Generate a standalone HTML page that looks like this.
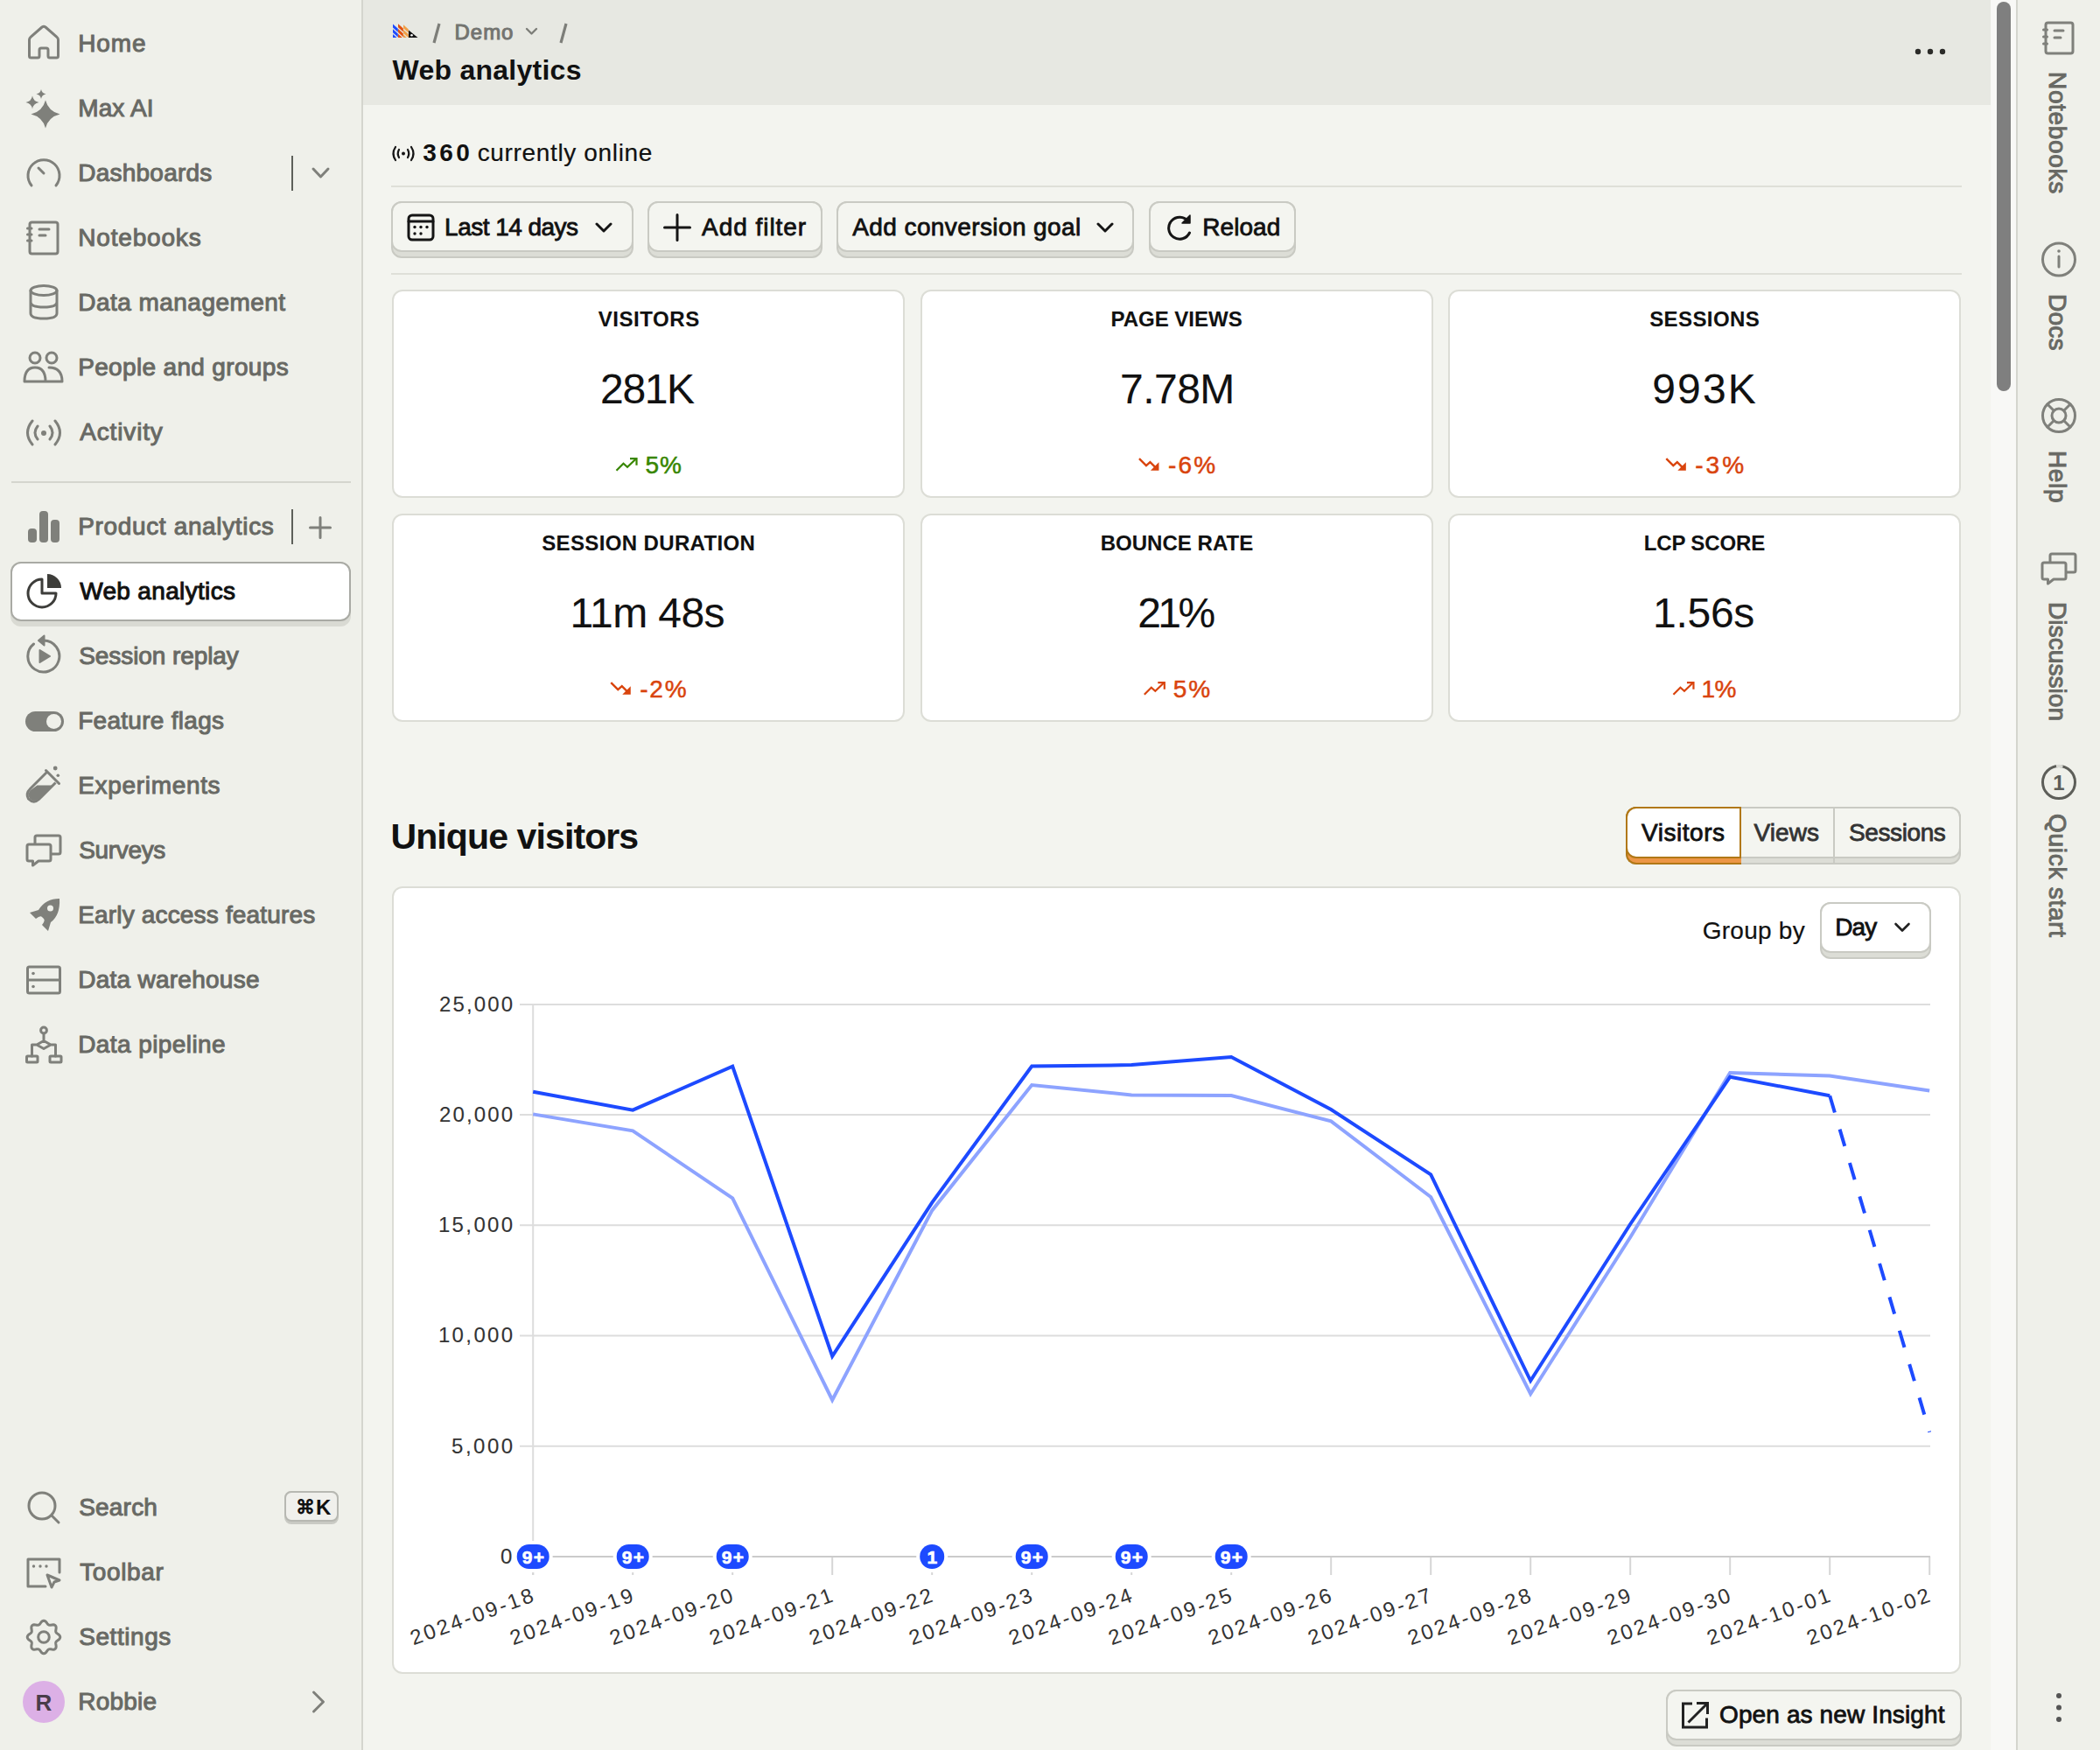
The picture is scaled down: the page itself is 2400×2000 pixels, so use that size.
<!DOCTYPE html>
<html><head><meta charset="utf-8"><title>Web analytics</title>
<style>
html,body{margin:0;padding:0;}
body{width:2400px;height:2000px;overflow:hidden;position:relative;background:#f3f4ef;font-family:"Liberation Sans", sans-serif;}
.t{position:absolute;white-space:nowrap;}
.b{position:absolute;box-sizing:border-box;}
@media (max-width:1300px){html{zoom:0.5;}}
</style></head><body>
<div class="b" style="left:0px;top:0px;width:413px;height:2000px;background:#eff0ea;"></div><div class="b" style="left:413px;top:0px;width:2px;height:2000px;background:#d4d5ce;"></div><div class="b" style="left:415px;top:0px;width:1860px;height:120px;background:#e7e8e2;"></div><div class="b" style="left:2275px;top:0px;width:29px;height:2000px;background:#f8f8f6;"></div><div class="b" style="left:2282px;top:2px;width:16px;height:445px;background:#7f7f7f;border-radius:8px;"></div><div class="b" style="left:2304px;top:0px;width:2px;height:2000px;background:#d4d5ce;"></div><div class="b" style="left:2306px;top:0px;width:94px;height:2000px;background:#eff0ea;"></div><div class="b" style="left:12px;top:642px;width:389px;height:74px;background:#d9dad3;border-radius:12px;"></div><div class="b" style="left:12px;top:642px;width:389px;height:68px;background:#ffffff;border:2px solid #a9aaa4;border-radius:12px;"></div><div class="t" style="left:89.20px;top:36.30px;font-size:28px;line-height:28px;font-weight:400;color:#686964;letter-spacing:0.933px;-webkit-text-stroke:1.0px #686964;">Home</div><div class="t" style="left:89.20px;top:110.30px;font-size:28px;line-height:28px;font-weight:400;color:#686964;letter-spacing:0.140px;-webkit-text-stroke:1.0px #686964;">Max AI</div><div class="t" style="left:89.20px;top:184.30px;font-size:28px;line-height:28px;font-weight:400;color:#686964;letter-spacing:0.244px;-webkit-text-stroke:1.0px #686964;">Dashboards</div><div class="t" style="left:89.20px;top:258.30px;font-size:28px;line-height:28px;font-weight:400;color:#686964;letter-spacing:0.825px;-webkit-text-stroke:1.0px #686964;">Notebooks</div><div class="t" style="left:89.20px;top:332.30px;font-size:28px;line-height:28px;font-weight:400;color:#686964;letter-spacing:0.471px;-webkit-text-stroke:1.0px #686964;">Data management</div><div class="t" style="left:89.20px;top:406.30px;font-size:28px;line-height:28px;font-weight:400;color:#686964;letter-spacing:0.338px;-webkit-text-stroke:1.0px #686964;">People and groups</div><div class="t" style="left:91.20px;top:480.30px;font-size:28px;line-height:28px;font-weight:400;color:#686964;letter-spacing:0.857px;-webkit-text-stroke:1.0px #686964;">Activity</div><div class="t" style="left:89.20px;top:588.30px;font-size:28px;line-height:28px;font-weight:400;color:#686964;letter-spacing:0.650px;-webkit-text-stroke:1.0px #686964;">Product analytics</div><div class="t" style="left:91.20px;top:662.30px;font-size:28px;line-height:28px;font-weight:400;color:#111;letter-spacing:0.333px;-webkit-text-stroke:1.0px #111;">Web analytics</div><div class="t" style="left:90.20px;top:736.30px;font-size:28px;line-height:28px;font-weight:400;color:#686964;letter-spacing:-0.077px;-webkit-text-stroke:1.0px #686964;">Session replay</div><div class="t" style="left:89.20px;top:810.30px;font-size:28px;line-height:28px;font-weight:400;color:#686964;letter-spacing:0.283px;-webkit-text-stroke:1.0px #686964;">Feature flags</div><div class="t" style="left:89.20px;top:884.30px;font-size:28px;line-height:28px;font-weight:400;color:#686964;letter-spacing:0.680px;-webkit-text-stroke:1.0px #686964;">Experiments</div><div class="t" style="left:90.20px;top:958.30px;font-size:28px;line-height:28px;font-weight:400;color:#686964;letter-spacing:-0.333px;-webkit-text-stroke:1.0px #686964;">Surveys</div><div class="t" style="left:89.20px;top:1032.30px;font-size:28px;line-height:28px;font-weight:400;color:#686964;letter-spacing:0.170px;-webkit-text-stroke:1.0px #686964;">Early access features</div><div class="t" style="left:89.20px;top:1106.30px;font-size:28px;line-height:28px;font-weight:400;color:#686964;letter-spacing:0.262px;-webkit-text-stroke:1.0px #686964;">Data warehouse</div><div class="t" style="left:89.20px;top:1180.30px;font-size:28px;line-height:28px;font-weight:400;color:#686964;letter-spacing:0.417px;-webkit-text-stroke:1.0px #686964;">Data pipeline</div><div class="t" style="left:90.20px;top:1709.30px;font-size:28px;line-height:28px;font-weight:400;color:#686964;letter-spacing:0.200px;-webkit-text-stroke:1.0px #686964;">Search</div><div class="t" style="left:91.20px;top:1783.30px;font-size:28px;line-height:28px;font-weight:400;color:#686964;letter-spacing:0.633px;-webkit-text-stroke:1.0px #686964;">Toolbar</div><div class="t" style="left:90.20px;top:1857.30px;font-size:28px;line-height:28px;font-weight:400;color:#686964;letter-spacing:0.571px;-webkit-text-stroke:1.0px #686964;">Settings</div><div class="t" style="left:89.20px;top:1931.30px;font-size:28px;line-height:28px;font-weight:400;color:#686964;letter-spacing:0.220px;-webkit-text-stroke:1.0px #686964;">Robbie</div><svg class="b" style="left:0px;top:0px;" width="413" height="2000" viewBox="0 0 413 2000"><path d="M33.5 64 V45.5 Q33.5 43.5 35 42.3 L48 31 Q50 29.5 52 31 L65 42.3 Q66.5 43.5 66.5 45.5 V64 Q66.5 66 64.5 66 H57 Q55 66 55 64 V57 Q55 55 53 55 H47 Q45 55 45 57 V64 Q45 66 43 66 H35.5 Q33.5 66 33.5 64 Z" fill="none" stroke="#7f807b" stroke-width="3" stroke-linecap="round" stroke-linejoin="round"/><path d="M52 114.5 Q55.3 127.3 68.5 130.5 Q55.3 133.7 52 146.5 Q48.7 133.7 35.5 130.5 Q48.7 127.3 52 114.5 Z" fill="#7f807b"/><path d="M37 109.5 Q38.125 115.875 44.5 117 Q38.125 118.125 37 124.5 Q35.875 118.125 29.5 117 Q35.875 115.875 37 109.5 Z" fill="#7f807b"/><path d="M47 102.0 Q47.825 106.675 52.5 107.5 Q47.825 108.325 47 113.0 Q46.175 108.325 41.5 107.5 Q46.175 106.675 47 102.0 Z" fill="#7f807b"/><path d="M36 212 A18 18 0 1 1 64 212" fill="none" stroke="#7f807b" stroke-width="3" stroke-linecap="round" stroke-linejoin="round" stroke-width="3.6"/><path d="M44 192 L50 198" fill="none" stroke="#7f807b" stroke-width="3" stroke-linecap="round" stroke-linejoin="round" stroke-width="3.6"/><rect x="34" y="254" width="32" height="36" rx="2.5" fill="none" stroke="#7f807b" stroke-width="3" stroke-linecap="round" stroke-linejoin="round"/><path d="M31.5 261 H36 M31.5 268 H36 M31.5 275 H36" fill="none" stroke="#7f807b" stroke-width="3" stroke-linecap="round" stroke-linejoin="round" stroke-width="2.4"/><path d="M45 262 H56 M45 269 H52" fill="none" stroke="#7f807b" stroke-width="3" stroke-linecap="round" stroke-linejoin="round"/><ellipse cx="50" cy="332" rx="15" ry="5.5" fill="none" stroke="#7f807b" stroke-width="3" stroke-linecap="round" stroke-linejoin="round"/><path d="M35 332 V358 Q35 364 50 364 Q65 364 65 358 V332 M35 345 Q35 351 50 351 Q65 351 65 345" fill="none" stroke="#7f807b" stroke-width="3" stroke-linecap="round" stroke-linejoin="round"/><circle cx="40" cy="409" r="6" fill="none" stroke="#7f807b" stroke-width="3" stroke-linecap="round" stroke-linejoin="round"/><circle cx="59" cy="409" r="6" fill="none" stroke="#7f807b" stroke-width="3" stroke-linecap="round" stroke-linejoin="round"/><path d="M28 436 Q28 420 40 420 Q52 420 52 436 Z M56 420 Q71 420 71 436 H52" fill="none" stroke="#7f807b" stroke-width="3" stroke-linecap="round" stroke-linejoin="round"/><path d="M37 481 Q26 494.5 37 508 M63 481 Q74 494.5 63 508 M43 487 Q37 494.5 43 502 M57 487 Q63 494.5 57 502" fill="none" stroke="#7f807b" stroke-width="3" stroke-linecap="round" stroke-linejoin="round" stroke-width="3.2"/><circle cx="50" cy="495" r="3" fill="#7f807b"/><rect x="32" y="604" width="10" height="16" rx="4" fill="#7f807b"/><rect x="45" y="584" width="10" height="36" rx="4" fill="#7f807b"/><rect x="58" y="594" width="10" height="26" rx="4" fill="#7f807b"/><path d="M48 662 A16 16 0 1 0 64 678 H48 Z" fill="none" stroke="#3d3d3a" stroke-width="3" stroke-linejoin="round"/><path d="M54 656 A16 16 0 0 1 70 672 H54 Z" fill="#3d3d3a"/><path d="M50 732 A18 18 0 1 1 38.5 736" fill="none" stroke="#7f807b" stroke-width="3" stroke-linecap="round" stroke-linejoin="round" stroke-width="3.8"/><path d="M50.5 726.5 L44 732 L50.5 737.5 Z" fill="#7f807b" stroke="#7f807b" stroke-width="2" stroke-linejoin="round"/><path d="M45.5 743 L57 750 L45.5 757 Z" fill="#7f807b" stroke="#7f807b" stroke-width="2" stroke-linejoin="round"/><rect x="29" y="813" width="44" height="23" rx="11.5" fill="#7f807b"/><circle cx="61.5" cy="824.5" r="8.5" fill="#eff0ea"/><path d="M53.5 882.5 L34.5 901.5 Q29 907 32.5 913 Q38.5 919 44.5 913.5 L63.5 894.5" fill="none" stroke="#7f807b" stroke-width="3"/><path d="M42.5 897.5 H59.5 L44.5 912.5 Q38.5 917.5 34 912.5 Q30.5 907.5 35 903 Z" fill="#7f807b"/><path d="M52.5 880.5 L67.5 895.5" fill="none" stroke="#7f807b" stroke-width="3" stroke-linecap="round" stroke-linejoin="round" stroke-width="3.2"/><circle cx="63.2" cy="878" r="2.4" fill="#7f807b"/><circle cx="66.3" cy="886.2" r="1.8" fill="#7f807b"/><path d="M33 965 H56 Q58 965 58 967 V982 Q58 984 56 984 H44 L37.5 989 V984 H33 Q31 984 31 982 V967 Q31 965 33 965 Z" fill="none" stroke="#7f807b" stroke-width="3" stroke-linecap="round" stroke-linejoin="round" stroke-width="2.8"/><path d="M40 964 V957 Q40 955 42 955 H67 Q69 955 69 957 V974 Q69 976 67 976 H59" fill="none" stroke="#7f807b" stroke-width="3" stroke-linecap="round" stroke-linejoin="round" stroke-width="2.8"/><path d="M68 1027 Q52 1027 44 1040 L34 1043 L41 1050 Q46 1046 48 1048 L50 1050 Q52 1052 48 1057 L55 1064 L58 1054 Q69 1046 68 1027 Z" fill="#7f807b"/><circle cx="57.5" cy="1038" r="3.5" fill="#eff0ea"/><rect x="31.5" y="1105" width="37" height="30" rx="2" fill="none" stroke="#7f807b" stroke-width="3" stroke-linecap="round" stroke-linejoin="round" stroke-width="2.8"/><path d="M31.5 1120 H68.5" fill="none" stroke="#7f807b" stroke-width="3" stroke-linecap="round" stroke-linejoin="round" stroke-width="2.8"/><circle cx="38" cy="1112.5" r="1.8" fill="#7f807b"/><circle cx="38" cy="1127.5" r="1.8" fill="#7f807b"/><circle cx="50" cy="1177.5" r="3.4" fill="none" stroke="#7f807b" stroke-width="3" stroke-linecap="round" stroke-linejoin="round" stroke-width="2.6"/><path d="M50 1181 V1189.5 M50 1189.5 L58 1194 L50 1198.5 L42 1194 Z M42 1194 H36.5 V1207 M58 1194 H63.5 V1207" fill="none" stroke="#7f807b" stroke-width="3" stroke-linecap="round" stroke-linejoin="round" stroke-width="2.6"/><rect x="30.5" y="1207" width="12.5" height="7" rx="1" fill="none" stroke="#7f807b" stroke-width="3" stroke-linecap="round" stroke-linejoin="round" stroke-width="2.6"/><rect x="57" y="1207" width="13" height="7" rx="1" fill="none" stroke="#7f807b" stroke-width="3" stroke-linecap="round" stroke-linejoin="round" stroke-width="2.6"/><circle cx="48" cy="1721" r="15" fill="none" stroke="#7f807b" stroke-width="3" stroke-linecap="round" stroke-linejoin="round"/><path d="M59 1732 L67 1740" fill="none" stroke="#7f807b" stroke-width="3" stroke-linecap="round" stroke-linejoin="round"/><path d="M52 1813 H32 V1782 H68 V1797" fill="none" stroke="#7f807b" stroke-width="3" stroke-linecap="round" stroke-linejoin="round" stroke-width="2.8"/><circle cx="38.5" cy="1790" r="1.7" fill="#7f807b"/><circle cx="46" cy="1790" r="1.7" fill="#7f807b"/><circle cx="53" cy="1790" r="1.7" fill="#7f807b"/><path d="M54 1800 L68 1806 L62 1808 L59 1814 Z" fill="none" stroke="#7f807b" stroke-width="3" stroke-linecap="round" stroke-linejoin="round" stroke-width="2.6"/><path d="M50.00 1852.20 L51.21 1852.49 L52.33 1853.30 L53.30 1854.42 L54.13 1855.59 L54.90 1856.56 L55.74 1857.14 L56.75 1857.32 L57.97 1857.19 L59.39 1856.95 L60.87 1856.84 L62.23 1857.06 L63.29 1857.71 L63.94 1858.77 L64.16 1860.13 L64.05 1861.61 L63.81 1863.03 L63.68 1864.25 L63.86 1865.26 L64.44 1866.10 L65.41 1866.87 L66.58 1867.70 L67.70 1868.67 L68.51 1869.79 L68.80 1871.00 L68.51 1872.21 L67.70 1873.33 L66.58 1874.30 L65.41 1875.13 L64.44 1875.90 L63.86 1876.74 L63.68 1877.75 L63.81 1878.97 L64.05 1880.39 L64.16 1881.87 L63.94 1883.23 L63.29 1884.29 L62.23 1884.94 L60.87 1885.16 L59.39 1885.05 L57.97 1884.81 L56.75 1884.68 L55.74 1884.86 L54.90 1885.44 L54.13 1886.41 L53.30 1887.58 L52.33 1888.70 L51.21 1889.51 L50.00 1889.80 L48.79 1889.51 L47.67 1888.70 L46.70 1887.58 L45.87 1886.41 L45.10 1885.44 L44.26 1884.86 L43.25 1884.68 L42.03 1884.81 L40.61 1885.05 L39.13 1885.16 L37.77 1884.94 L36.71 1884.29 L36.06 1883.23 L35.84 1881.87 L35.95 1880.39 L36.19 1878.97 L36.32 1877.75 L36.14 1876.74 L35.56 1875.90 L34.59 1875.13 L33.42 1874.30 L32.30 1873.33 L31.49 1872.21 L31.20 1871.00 L31.49 1869.79 L32.30 1868.67 L33.42 1867.70 L34.59 1866.87 L35.56 1866.10 L36.14 1865.26 L36.32 1864.25 L36.19 1863.03 L35.95 1861.61 L35.84 1860.13 L36.06 1858.77 L36.71 1857.71 L37.77 1857.06 L39.13 1856.84 L40.61 1856.95 L42.02 1857.19 L43.25 1857.32 L44.26 1857.14 L45.10 1856.56 L45.87 1855.59 L46.70 1854.42 L47.67 1853.30 L48.79 1852.49 Z" fill="none" stroke="#7f807b" stroke-width="3" stroke-linecap="round" stroke-linejoin="round" stroke-width="2.8"/><circle cx="50" cy="1871" r="6.3" fill="none" stroke="#7f807b" stroke-width="3" stroke-linecap="round" stroke-linejoin="round" stroke-width="2.8"/></svg><div class="b" style="left:333px;top:178px;width:2px;height:40px;background:#5e605a;"></div><div class="b" style="left:333px;top:582px;width:2px;height:40px;background:#5e605a;"></div><svg class="b" style="left:350px;top:185px;" width="30" height="25" viewBox="0 0 30 25"><path d="M8 8 L16.5 17 L25 8" fill="none" stroke="#7f807b" stroke-width="3" stroke-linecap="round" stroke-linejoin="round" stroke-width="3"/></svg><svg class="b" style="left:350px;top:587px;" width="32" height="32" viewBox="0 0 32 32"><path d="M16 4.5 V27.5 M4.5 16 H27.5" fill="none" stroke="#7f807b" stroke-width="3" stroke-linecap="round" stroke-linejoin="round" stroke-width="2.6"/></svg><div class="b" style="left:13px;top:550px;width:388px;height:2px;background:#d4d5ce;"></div><div class="b" style="left:325px;top:1704px;width:62px;height:38px;background:#c9cac4;border-radius:8px;"></div><div class="b" style="left:325px;top:1704px;width:62px;height:35px;background:#f0f0ec;border:2px solid #b7b8b2;border-radius:8px;"></div><div class="t" style="left:338px;top:1712.38px;font-size:22px;line-height:22px;font-weight:700;color:#111;">&#8984;</div><div class="t" style="left:361px;top:1710.68px;font-size:24px;line-height:24px;font-weight:700;color:#111;">K</div><div class="b" style="left:26px;top:1921px;width:48px;height:48px;background:#dcb0e6;border-radius:50%;"></div><div class="t" style="left:30.0px;width:40px;text-align:center;top:1932.99px;font-size:26px;line-height:26px;font-weight:700;color:#4a3d4a;">R</div><svg class="b" style="left:350px;top:1928px;" width="30" height="34" viewBox="0 0 30 34"><path d="M8.5 6 L19.5 17 L8.5 28" fill="none" stroke="#7f807b" stroke-width="3" stroke-linecap="round" stroke-linejoin="round" stroke-width="3.8" stroke-linecap="butt" stroke-linejoin="miter"/></svg><svg class="b" style="left:0px;top:0px;" width="2400" height="120" viewBox="0 0 2400 120"><clipPath id="lgclip"><rect x="440" y="20" width="40" height="23"/></clipPath><g clip-path="url(#lgclip)"><path d="M449 27.6 L454.8 32.820000000000014 V36.820000000000014 L449 31.6 Z" fill="#1d4aff"/><path d="M449 33.300000000000004 L454.8 38.52000000000002 V42.52000000000002 L449 37.300000000000004 Z" fill="#1d4aff"/><path d="M449 39.0 L454.8 44.22000000000001 V48.22000000000001 L449 43.0 Z" fill="#1d4aff"/><path d="M449 44.7 L454.8 49.920000000000016 V53.920000000000016 L449 48.7 Z" fill="#1d4aff"/><path d="M455 27.3 L460.8 32.52000000000001 V36.52000000000001 L455 31.3 Z" fill="#e2500d"/><path d="M455 33.0 L460.8 38.22000000000001 V42.22000000000001 L455 37.0 Z" fill="#e2500d"/><path d="M455 38.7 L460.8 43.920000000000016 V47.920000000000016 L455 42.7 Z" fill="#e2500d"/><path d="M455 44.400000000000006 L460.8 49.62000000000002 V53.62000000000002 L455 48.400000000000006 Z" fill="#e2500d"/><path d="M461 28.2 L466.8 33.42000000000001 V37.42000000000001 L461 32.2 Z" fill="#f0a048"/><path d="M461 33.9 L466.8 39.12000000000001 V43.12000000000001 L461 37.9 Z" fill="#f0a048"/><path d="M461 39.6 L466.8 44.820000000000014 V48.820000000000014 L461 43.6 Z" fill="#f0a048"/><path d="M461 45.3 L466.8 50.52000000000001 V54.52000000000001 L461 49.3 Z" fill="#f0a048"/></g><path d="M467 34.5 L477.5 43 H467 Z" fill="#111"/><circle cx="470.5" cy="40.3" r="1.3" fill="#fff"/><path d="M502 27 L496 49 M647 27 L641 49" stroke="#7d7e79" stroke-width="3.2" stroke-linecap="butt"/><path d="M602 33 L607.5 38.5 L613 33" fill="none" stroke="#7d7e79" stroke-width="2.4" stroke-linecap="round" stroke-linejoin="round"/><circle cx="2192" cy="59" r="3.2" fill="#2b2b28"/><circle cx="2206" cy="59" r="3.2" fill="#2b2b28"/><circle cx="2220" cy="59" r="3.2" fill="#2b2b28"/></svg><div class="t" style="left:519.60px;top:24.68px;font-size:24px;line-height:24px;font-weight:400;color:#737470;letter-spacing:0.933px;-webkit-text-stroke:1.0px #737470;">Demo</div><div class="t" style="left:448.60px;top:63.91px;font-size:32px;line-height:32px;font-weight:700;color:#111;letter-spacing:0.250px;">Web analytics</div><svg class="b" style="left:0px;top:0px;pointer-events:none;" width="2400" height="2000" viewBox="0 0 2400 2000"><rect x="2338" y="26" width="31" height="35" rx="2.5" fill="none" stroke="#7f807b" stroke-width="3" stroke-linecap="round" stroke-linejoin="round"/><path d="M2335.5 34 H2339.5 M2335.5 42 H2339.5 M2335.5 50 H2339.5" fill="none" stroke="#7f807b" stroke-width="3" stroke-linecap="round" stroke-linejoin="round" stroke-width="2.4"/><path d="M2348 35 H2358 M2348 43 H2355" fill="none" stroke="#7f807b" stroke-width="3" stroke-linecap="round" stroke-linejoin="round"/><circle cx="2353" cy="296.5" r="18.5" fill="none" stroke="#7f807b" stroke-width="3" stroke-linecap="round" stroke-linejoin="round" stroke-width="2.8"/><path d="M2353 293 V305" fill="none" stroke="#7f807b" stroke-width="3" stroke-linecap="round" stroke-linejoin="round" stroke-width="3"/><circle cx="2353" cy="287" r="1.8" fill="#7f807b"/><circle cx="2353" cy="475" r="18.5" fill="none" stroke="#7f807b" stroke-width="3" stroke-linecap="round" stroke-linejoin="round" stroke-width="2.8"/><circle cx="2353" cy="475" r="8" fill="none" stroke="#7f807b" stroke-width="3" stroke-linecap="round" stroke-linejoin="round" stroke-width="2.8"/><path d="M2340 462 L2347 469 M2366 462 L2359 469 M2340 488 L2347 481 M2366 488 L2359 481" fill="none" stroke="#7f807b" stroke-width="3" stroke-linecap="round" stroke-linejoin="round" stroke-width="2.8"/><path d="M2336 643 H2359 Q2361 643 2361 645 V660 Q2361 662 2359 662 H2347 L2340.5 667 V662 H2336 Q2334 662 2334 660 V645 Q2334 643 2336 643 Z" fill="none" stroke="#7f807b" stroke-width="3" stroke-linecap="round" stroke-linejoin="round" stroke-width="2.8"/><path d="M2343 642 V635 Q2343 633 2345 633 H2370 Q2372 633 2372 635 V652 Q2372 654 2370 654 H2362" fill="none" stroke="#7f807b" stroke-width="3" stroke-linecap="round" stroke-linejoin="round" stroke-width="2.8"/><circle cx="2353" cy="894" r="18.5" fill="none" stroke="#5d5e59" stroke-width="3"/><path d="M2350 875.7 A18.5 18.5 0 0 1 2357.5 876" fill="none" stroke="#d8d9d3" stroke-width="3.2"/><circle cx="2353" cy="1938" r="3" fill="#555"/><circle cx="2353" cy="1951.5" r="3" fill="#555"/><circle cx="2353" cy="1965" r="3" fill="#555"/></svg><div class="t" style="left:2343px;top:883px;font-size:24px;line-height:24px;font-weight:700;color:#5d5e59;width:20px;text-align:center;">1</div><div class="t" style="left:2365.10px;top:82.40px;font-size:28px;line-height:28px;font-weight:400;color:#686964;letter-spacing:0.662px;transform-origin:0 0;transform:rotate(90deg);-webkit-text-stroke:1.0px #686964;">Notebooks</div><div class="t" style="left:2365.10px;top:335.70px;font-size:28px;line-height:28px;font-weight:400;color:#686964;letter-spacing:0.200px;transform-origin:0 0;transform:rotate(90deg);-webkit-text-stroke:1.0px #686964;">Docs</div><div class="t" style="left:2365.10px;top:514.50px;font-size:28px;line-height:28px;font-weight:400;color:#686964;letter-spacing:0.633px;transform-origin:0 0;transform:rotate(90deg);-webkit-text-stroke:1.0px #686964;">Help</div><div class="t" style="left:2365.10px;top:688.00px;font-size:28px;line-height:28px;font-weight:400;color:#686964;letter-spacing:0.078px;transform-origin:0 0;transform:rotate(90deg);-webkit-text-stroke:1.0px #686964;">Discussion</div><div class="t" style="left:2365.10px;top:930.00px;font-size:28px;line-height:28px;font-weight:400;color:#686964;letter-spacing:0.720px;transform-origin:0 0;transform:rotate(90deg);-webkit-text-stroke:1.0px #686964;">Quick start</div><svg class="b" style="left:0px;top:0px;" width="2400" height="2000" viewBox="0 0 2400 2000"><path d="M452 168 Q447 175.5 452 183 M470 168 Q475 175.5 470 183 M456 171 Q453.5 175.5 456 180 M466 171 Q468.5 175.5 466 180" fill="none" stroke="#151515" stroke-width="2.2" stroke-linecap="round"/><circle cx="461" cy="175.5" r="2" fill="#151515"/></svg><div class="t" style="left:483.20px;top:161.30px;font-size:28px;line-height:28px;font-weight:700;color:#111;letter-spacing:3.500px;">360</div><div class="t" style="left:545.70px;top:161.30px;font-size:28px;line-height:28px;font-weight:400;color:#111;letter-spacing:0.653px;-webkit-text-stroke:0.2px #111;">currently online</div><div class="b" style="left:447px;top:212px;width:1795px;height:2px;background:#dedfd8;"></div><div class="b" style="left:447px;top:312px;width:1795px;height:2px;background:#dedfd8;"></div><div class="b" style="left:447px;top:230px;width:277px;height:65px;background:#dcddd6;border:2px solid #c9cac3;border-radius:12px;"></div><div class="b" style="left:447px;top:230px;width:277px;height:58px;background:#f4f5f0;border:2px solid #c9cac3;border-radius:12px;"></div><div class="b" style="left:740px;top:230px;width:200px;height:65px;background:#dcddd6;border:2px solid #c9cac3;border-radius:12px;"></div><div class="b" style="left:740px;top:230px;width:200px;height:58px;background:#f4f5f0;border:2px solid #c9cac3;border-radius:12px;"></div><div class="b" style="left:956px;top:230px;width:340px;height:65px;background:#dcddd6;border:2px solid #c9cac3;border-radius:12px;"></div><div class="b" style="left:956px;top:230px;width:340px;height:58px;background:#f4f5f0;border:2px solid #c9cac3;border-radius:12px;"></div><div class="b" style="left:1313px;top:230px;width:168px;height:65px;background:#dcddd6;border:2px solid #c9cac3;border-radius:12px;"></div><div class="b" style="left:1313px;top:230px;width:168px;height:58px;background:#f4f5f0;border:2px solid #c9cac3;border-radius:12px;"></div><svg class="b" style="left:0px;top:0px;" width="2400" height="2000" viewBox="0 0 2400 2000"><rect x="467" y="246" width="28" height="28" rx="4" fill="none" stroke="#151515" stroke-width="3" stroke-linecap="round" stroke-linejoin="round" stroke-width="2.8"/><path d="M467 253 H495" fill="none" stroke="#151515" stroke-width="3" stroke-linecap="round" stroke-linejoin="round" stroke-width="2.8"/><circle cx="474" cy="259.5" r="1.7" fill="#151515"/><circle cx="481" cy="259.5" r="1.7" fill="#151515"/><circle cx="488" cy="259.5" r="1.7" fill="#151515"/><circle cx="474" cy="267" r="1.7" fill="#151515"/><circle cx="481" cy="267" r="1.7" fill="#151515"/><path d="M682 256 L690 264 L698 256" fill="none" stroke="#151515" stroke-width="3" stroke-linecap="round" stroke-linejoin="round" stroke-width="2.6"/><path d="M774 245.5 V274.5 M759.5 260 H788.5" fill="none" stroke="#151515" stroke-width="3" stroke-linecap="round" stroke-linejoin="round" stroke-width="2.4" stroke-linecap="butt"/><path d="M1255 256 L1263 264 L1271 256" fill="none" stroke="#151515" stroke-width="3" stroke-linecap="round" stroke-linejoin="round" stroke-width="2.6"/><path d="M1358 253 A12.5 12.5 0 1 0 1359.5 266" fill="none" stroke="#151515" stroke-width="3" stroke-linecap="round" stroke-linejoin="round" stroke-width="3"/><path d="M1360 246 V255 H1351 Z" fill="#151515" stroke="#151515" stroke-width="1.5" stroke-linejoin="round"/></svg><div class="t" style="left:508.10px;top:246.30px;font-size:28px;line-height:28px;font-weight:400;color:#111;letter-spacing:-0.527px;-webkit-text-stroke:0.8px #111;">Last 14 days</div><div class="t" style="left:802.00px;top:246.30px;font-size:28px;line-height:28px;font-weight:400;color:#111;letter-spacing:0.967px;-webkit-text-stroke:0.8px #111;">Add filter</div><div class="t" style="left:974.30px;top:246.30px;font-size:28px;line-height:28px;font-weight:400;color:#111;letter-spacing:0.400px;-webkit-text-stroke:0.8px #111;">Add conversion goal</div><div class="t" style="left:1374.30px;top:246.30px;font-size:28px;line-height:28px;font-weight:400;color:#111;letter-spacing:0.040px;-webkit-text-stroke:0.8px #111;">Reload</div><div class="b" style="left:448px;top:331px;width:586px;height:238px;background:#fff;border:2px solid #dcddd6;border-radius:12px;"></div><div class="t" style="left:683.70px;top:352.88px;font-size:24px;line-height:24px;font-weight:700;color:#111;letter-spacing:0.557px;-webkit-text-stroke:0.1px #111;">VISITORS</div><div class="t" style="left:686.10px;top:421.37px;font-size:48px;line-height:48px;font-weight:400;color:#111;letter-spacing:-1.367px;-webkit-text-stroke:0.1px #111;">281K</div><div class="t" style="left:737.50px;top:517.50px;font-size:28px;line-height:28px;font-weight:400;color:#388600;letter-spacing:1.000px;-webkit-text-stroke:0.5px #388600;">5%</div><div class="b" style="left:1052px;top:331px;width:586px;height:238px;background:#fff;border:2px solid #dcddd6;border-radius:12px;"></div><div class="t" style="left:1269.50px;top:352.88px;font-size:24px;line-height:24px;font-weight:700;color:#111;letter-spacing:-0.011px;-webkit-text-stroke:0.1px #111;">PAGE VIEWS</div><div class="t" style="left:1280.00px;top:421.37px;font-size:48px;line-height:48px;font-weight:400;color:#111;letter-spacing:-0.525px;-webkit-text-stroke:0.1px #111;">7.78M</div><div class="t" style="left:1334.95px;top:517.50px;font-size:28px;line-height:28px;font-weight:400;color:#d9440d;letter-spacing:2.250px;-webkit-text-stroke:0.5px #d9440d;">-6%</div><div class="b" style="left:1655px;top:331px;width:586px;height:238px;background:#fff;border:2px solid #dcddd6;border-radius:12px;"></div><div class="t" style="left:1885.20px;top:352.88px;font-size:24px;line-height:24px;font-weight:700;color:#111;letter-spacing:0.414px;-webkit-text-stroke:0.1px #111;">SESSIONS</div><div class="t" style="left:1888.25px;top:421.37px;font-size:48px;line-height:48px;font-weight:400;color:#111;letter-spacing:2.133px;-webkit-text-stroke:0.1px #111;">993K</div><div class="t" style="left:1937.30px;top:517.50px;font-size:28px;line-height:28px;font-weight:400;color:#d9440d;letter-spacing:3.000px;-webkit-text-stroke:0.5px #d9440d;">-3%</div><div class="b" style="left:448px;top:587px;width:586px;height:238px;background:#fff;border:2px solid #dcddd6;border-radius:12px;"></div><div class="t" style="left:619.25px;top:608.88px;font-size:24px;line-height:24px;font-weight:700;color:#111;letter-spacing:0.360px;-webkit-text-stroke:0.1px #111;">SESSION DURATION</div><div class="t" style="left:651.55px;top:677.37px;font-size:48px;line-height:48px;font-weight:400;color:#111;letter-spacing:-0.600px;-webkit-text-stroke:0.1px #111;">11m 48s</div><div class="t" style="left:731.25px;top:773.50px;font-size:28px;line-height:28px;font-weight:400;color:#d9440d;letter-spacing:1.750px;-webkit-text-stroke:0.5px #d9440d;">-2%</div><div class="b" style="left:1052px;top:587px;width:586px;height:238px;background:#fff;border:2px solid #dcddd6;border-radius:12px;"></div><div class="t" style="left:1257.65px;top:608.88px;font-size:24px;line-height:24px;font-weight:700;color:#111;letter-spacing:0.040px;-webkit-text-stroke:0.1px #111;">BOUNCE RATE</div><div class="t" style="left:1300.20px;top:677.37px;font-size:48px;line-height:48px;font-weight:400;color:#111;letter-spacing:-3.550px;-webkit-text-stroke:0.1px #111;">21%</div><div class="t" style="left:1340.80px;top:773.50px;font-size:28px;line-height:28px;font-weight:400;color:#d9440d;letter-spacing:2.000px;-webkit-text-stroke:0.5px #d9440d;">5%</div><div class="b" style="left:1655px;top:587px;width:586px;height:238px;background:#fff;border:2px solid #dcddd6;border-radius:12px;"></div><div class="t" style="left:1878.70px;top:608.88px;font-size:24px;line-height:24px;font-weight:700;color:#111;letter-spacing:-0.138px;-webkit-text-stroke:0.1px #111;">LCP SCORE</div><div class="t" style="left:1889.00px;top:677.37px;font-size:48px;line-height:48px;font-weight:400;color:#111;letter-spacing:-0.275px;-webkit-text-stroke:0.1px #111;">1.56s</div><div class="t" style="left:1944.45px;top:773.50px;font-size:28px;line-height:28px;font-weight:400;color:#d9440d;letter-spacing:-0.500px;-webkit-text-stroke:0.5px #d9440d;">1%</div><svg class="b" style="left:0px;top:0px;" width="2400" height="2000" viewBox="0 0 2400 2000"><path d="M704.5 537.7 L712.5 529.7 L717.0 533.7 L727.0 524.2" fill="none" stroke="#388600" stroke-width="2.2" stroke-linejoin="miter"/><path d="M720.0 524.2 H727.5 V531.7" fill="none" stroke="#388600" stroke-width="2.2"/><path d="M1301.95 524.2 L1309.95 532.2 L1314.45 528.2 L1321.45 535.2" fill="none" stroke="#d9440d" stroke-width="2.4" stroke-linejoin="miter"/><path d="M1324.45 528.2 V537.7 H1314.95 Z" fill="#d9440d"/><path d="M1904.3 524.2 L1912.3 532.2 L1916.8 528.2 L1923.8 535.2" fill="none" stroke="#d9440d" stroke-width="2.4" stroke-linejoin="miter"/><path d="M1926.8 528.2 V537.7 H1917.3 Z" fill="#d9440d"/><path d="M698.25 780.2 L706.25 788.2 L710.75 784.2 L717.75 791.2" fill="none" stroke="#d9440d" stroke-width="2.4" stroke-linejoin="miter"/><path d="M720.75 784.2 V793.7 H711.25 Z" fill="#d9440d"/><path d="M1307.8 793.7 L1315.8 785.7 L1320.3 789.7 L1330.3 780.2" fill="none" stroke="#d9440d" stroke-width="2.2" stroke-linejoin="miter"/><path d="M1323.3 780.2 H1330.8 V787.7" fill="none" stroke="#d9440d" stroke-width="2.2"/><path d="M1912.45 793.7 L1920.45 785.7 L1924.95 789.7 L1934.95 780.2" fill="none" stroke="#d9440d" stroke-width="2.2" stroke-linejoin="miter"/><path d="M1927.95 780.2 H1935.45 V787.7" fill="none" stroke="#d9440d" stroke-width="2.2"/></svg><div class="t" style="left:446.50px;top:935.89px;font-size:41px;line-height:41px;font-weight:700;color:#111;letter-spacing:-0.893px;">Unique visitors</div><div class="b" style="left:1858px;top:922px;width:383px;height:66px;background:#dcddd6;border:2px solid #c9cac3;border-radius:12px;"></div><div class="b" style="left:1858px;top:922px;width:383px;height:59px;background:#f4f5f0;border:2px solid #c9cac3;border-radius:12px;"></div><div class="b" style="left:2095px;top:922px;width:2px;height:66px;background:#c9cac3;"></div><div class="b" style="left:1858px;top:922px;width:132px;height:66px;background:#ec9646;border:2px solid #b17816;border-radius:12px 0 0 12px;border-right:none;"></div><div class="b" style="left:1858px;top:922px;width:132px;height:59px;background:#ffffff;border:2px solid #b17816;border-radius:12px 0 0 12px;"></div><div class="t" style="left:1876.00px;top:938.30px;font-size:28px;line-height:28px;font-weight:400;color:#111;letter-spacing:0.529px;-webkit-text-stroke:0.8px #111;">Visitors</div><div class="t" style="left:2004.60px;top:938.30px;font-size:28px;line-height:28px;font-weight:400;color:#333;letter-spacing:0.050px;-webkit-text-stroke:0.8px #333;">Views</div><div class="t" style="left:2113.00px;top:938.30px;font-size:28px;line-height:28px;font-weight:400;color:#333;letter-spacing:-0.400px;-webkit-text-stroke:0.8px #333;">Sessions</div><div class="b" style="left:448px;top:1013px;width:1793px;height:900px;background:#fff;border:2px solid #dcddd6;border-radius:12px;"></div><div class="t" style="left:1945.70px;top:1050.00px;font-size:28px;line-height:28px;font-weight:400;color:#111;letter-spacing:0.257px;-webkit-text-stroke:0.2px #111;">Group by</div><div class="b" style="left:2080px;top:1030.5px;width:127px;height:65px;background:#dcddd6;border:2px solid #c9cac3;border-radius:12px;"></div><div class="b" style="left:2080px;top:1030.5px;width:127px;height:58px;background:#ffffff;border:2px solid #c9cac3;border-radius:12px;"></div><div class="t" style="left:2097.30px;top:1046.00px;font-size:28px;line-height:28px;font-weight:400;color:#111;letter-spacing:-0.900px;-webkit-text-stroke:0.8px #111;">Day</div><svg class="b" style="left:2160px;top:1050px;" width="30" height="20" viewBox="0 0 30 20"><path d="M6.5 6 L14 13.5 L21.5 6" fill="none" stroke="#222" stroke-width="2.6" stroke-linecap="round" stroke-linejoin="round"/></svg><svg class="b" style="left:0px;top:0px;" width="2400" height="2000" viewBox="0 0 2400 2000"><path d="M594 1652.7 H2206" stroke="#dddddd" stroke-width="2"/><path d="M594 1526.5 H2206" stroke="#dddddd" stroke-width="2"/><path d="M594 1400.3 H2206" stroke="#dddddd" stroke-width="2"/><path d="M594 1274.1 H2206" stroke="#dddddd" stroke-width="2"/><path d="M594 1147.9 H2206" stroke="#dddddd" stroke-width="2"/><path d="M609.2 1148 V1800" stroke="#dddddd" stroke-width="2"/><path d="M609.2 1779 V1800" stroke="#d6d6d6" stroke-width="2"/><path d="M723.2 1779 V1800" stroke="#d6d6d6" stroke-width="2"/><path d="M837.2 1779 V1800" stroke="#d6d6d6" stroke-width="2"/><path d="M951.2 1779 V1800" stroke="#d6d6d6" stroke-width="2"/><path d="M1065.2 1779 V1800" stroke="#d6d6d6" stroke-width="2"/><path d="M1179.2 1779 V1800" stroke="#d6d6d6" stroke-width="2"/><path d="M1293.2 1779 V1800" stroke="#d6d6d6" stroke-width="2"/><path d="M1407.2 1779 V1800" stroke="#d6d6d6" stroke-width="2"/><path d="M1521.2 1779 V1800" stroke="#d6d6d6" stroke-width="2"/><path d="M1635.2 1779 V1800" stroke="#d6d6d6" stroke-width="2"/><path d="M1749.2 1779 V1800" stroke="#d6d6d6" stroke-width="2"/><path d="M1863.2 1779 V1800" stroke="#d6d6d6" stroke-width="2"/><path d="M1977.2 1779 V1800" stroke="#d6d6d6" stroke-width="2"/><path d="M2091.2 1779 V1800" stroke="#d6d6d6" stroke-width="2"/><path d="M2205.2 1779 V1800" stroke="#d6d6d6" stroke-width="2"/><path d="M594 1778.9 H2206" stroke="#cbcbcb" stroke-width="2"/><polyline points="609.2,1273.4 723.2,1292.3 837.2,1369.4 951.2,1600 1065.2,1383.4 1179.2,1240 1293.2,1251.4 1407.2,1252 1521.2,1281.4 1635.2,1368 1749.2,1593 1863.2,1414 1977.2,1226.1 2091.2,1229.4 2205.2,1246.6" fill="none" stroke="#8da3ff" stroke-width="4" stroke-linejoin="miter"/><polyline points="609.2,1247.7 723.2,1268.6 837.2,1218.6 951.2,1550 1065.2,1374.3 1179.2,1218.6 1293.2,1217.1 1407.2,1208 1521.2,1268 1635.2,1342.3 1749.2,1578 1863.2,1399 1977.2,1230.7 2091.2,1252.3" fill="none" stroke="#1d4aff" stroke-width="4" stroke-linejoin="miter"/><path d="M2091.2 1252.3 L2205.2 1636.7" fill="none" stroke="#1d4aff" stroke-width="4" stroke-dasharray="20 20"/><rect x="586.7" y="1761" width="45" height="36" rx="18" fill="#fff"/><rect x="590.7" y="1765" width="37" height="28" rx="14" fill="#1d4aff"/><text x="610.0" y="1787" text-anchor="middle" font-family="Liberation Sans" font-weight="700" font-size="21" letter-spacing="1.2" fill="#fff" stroke="#fff" stroke-width="0.6">9+</text><rect x="700.7" y="1761" width="45" height="36" rx="18" fill="#fff"/><rect x="704.7" y="1765" width="37" height="28" rx="14" fill="#1d4aff"/><text x="724.0" y="1787" text-anchor="middle" font-family="Liberation Sans" font-weight="700" font-size="21" letter-spacing="1.2" fill="#fff" stroke="#fff" stroke-width="0.6">9+</text><rect x="814.7" y="1761" width="45" height="36" rx="18" fill="#fff"/><rect x="818.7" y="1765" width="37" height="28" rx="14" fill="#1d4aff"/><text x="838.0" y="1787" text-anchor="middle" font-family="Liberation Sans" font-weight="700" font-size="21" letter-spacing="1.2" fill="#fff" stroke="#fff" stroke-width="0.6">9+</text><rect x="1047.2" y="1761" width="36" height="36" rx="18" fill="#fff"/><rect x="1051.2" y="1765" width="28" height="28" rx="14" fill="#1d4aff"/><text x="1066.0" y="1787" text-anchor="middle" font-family="Liberation Sans" font-weight="700" font-size="21" letter-spacing="1.2" fill="#fff" stroke="#fff" stroke-width="0.6">1</text><rect x="1156.7" y="1761" width="45" height="36" rx="18" fill="#fff"/><rect x="1160.7" y="1765" width="37" height="28" rx="14" fill="#1d4aff"/><text x="1180.0" y="1787" text-anchor="middle" font-family="Liberation Sans" font-weight="700" font-size="21" letter-spacing="1.2" fill="#fff" stroke="#fff" stroke-width="0.6">9+</text><rect x="1270.7" y="1761" width="45" height="36" rx="18" fill="#fff"/><rect x="1274.7" y="1765" width="37" height="28" rx="14" fill="#1d4aff"/><text x="1294.0" y="1787" text-anchor="middle" font-family="Liberation Sans" font-weight="700" font-size="21" letter-spacing="1.2" fill="#fff" stroke="#fff" stroke-width="0.6">9+</text><rect x="1384.7" y="1761" width="45" height="36" rx="18" fill="#fff"/><rect x="1388.7" y="1765" width="37" height="28" rx="14" fill="#1d4aff"/><text x="1408.0" y="1787" text-anchor="middle" font-family="Liberation Sans" font-weight="700" font-size="21" letter-spacing="1.2" fill="#fff" stroke="#fff" stroke-width="0.6">9+</text></svg><div class="t" style="left:501.90px;top:1135.88px;font-size:24px;line-height:24px;font-weight:400;color:#333;letter-spacing:2.180px;-webkit-text-stroke:0.1px #333;">25,000</div><div class="t" style="left:501.90px;top:1262.08px;font-size:24px;line-height:24px;font-weight:400;color:#333;letter-spacing:2.180px;-webkit-text-stroke:0.1px #333;">20,000</div><div class="t" style="left:500.90px;top:1388.28px;font-size:24px;line-height:24px;font-weight:400;color:#333;letter-spacing:2.380px;-webkit-text-stroke:0.1px #333;">15,000</div><div class="t" style="left:500.90px;top:1514.48px;font-size:24px;line-height:24px;font-weight:400;color:#333;letter-spacing:2.380px;-webkit-text-stroke:0.1px #333;">10,000</div><div class="t" style="left:516.10px;top:1640.68px;font-size:24px;line-height:24px;font-weight:400;color:#333;letter-spacing:2.475px;-webkit-text-stroke:0.1px #333;">5,000</div><div class="t" style="left:572.10px;top:1766.88px;font-size:24px;line-height:24px;font-weight:400;color:#333;letter-spacing:-1.100px;-webkit-text-stroke:0.1px #333;">0</div><div class="t" style="left:313.98px;top:1808.68px;width:300px;text-align:right;font-size:24px;line-height:24px;color:#333;letter-spacing:2.78px;transform-origin:100% 20.32px;transform:rotate(-20deg);">2024-09-18</div><div class="t" style="left:427.98px;top:1808.68px;width:300px;text-align:right;font-size:24px;line-height:24px;color:#333;letter-spacing:2.78px;transform-origin:100% 20.32px;transform:rotate(-20deg);">2024-09-19</div><div class="t" style="left:541.98px;top:1808.68px;width:300px;text-align:right;font-size:24px;line-height:24px;color:#333;letter-spacing:2.78px;transform-origin:100% 20.32px;transform:rotate(-20deg);">2024-09-20</div><div class="t" style="left:655.98px;top:1808.68px;width:300px;text-align:right;font-size:24px;line-height:24px;color:#333;letter-spacing:2.78px;transform-origin:100% 20.32px;transform:rotate(-20deg);">2024-09-21</div><div class="t" style="left:769.98px;top:1808.68px;width:300px;text-align:right;font-size:24px;line-height:24px;color:#333;letter-spacing:2.78px;transform-origin:100% 20.32px;transform:rotate(-20deg);">2024-09-22</div><div class="t" style="left:883.98px;top:1808.68px;width:300px;text-align:right;font-size:24px;line-height:24px;color:#333;letter-spacing:2.78px;transform-origin:100% 20.32px;transform:rotate(-20deg);">2024-09-23</div><div class="t" style="left:997.98px;top:1808.68px;width:300px;text-align:right;font-size:24px;line-height:24px;color:#333;letter-spacing:2.78px;transform-origin:100% 20.32px;transform:rotate(-20deg);">2024-09-24</div><div class="t" style="left:1111.98px;top:1808.68px;width:300px;text-align:right;font-size:24px;line-height:24px;color:#333;letter-spacing:2.78px;transform-origin:100% 20.32px;transform:rotate(-20deg);">2024-09-25</div><div class="t" style="left:1225.98px;top:1808.68px;width:300px;text-align:right;font-size:24px;line-height:24px;color:#333;letter-spacing:2.78px;transform-origin:100% 20.32px;transform:rotate(-20deg);">2024-09-26</div><div class="t" style="left:1339.98px;top:1808.68px;width:300px;text-align:right;font-size:24px;line-height:24px;color:#333;letter-spacing:2.78px;transform-origin:100% 20.32px;transform:rotate(-20deg);">2024-09-27</div><div class="t" style="left:1453.98px;top:1808.68px;width:300px;text-align:right;font-size:24px;line-height:24px;color:#333;letter-spacing:2.78px;transform-origin:100% 20.32px;transform:rotate(-20deg);">2024-09-28</div><div class="t" style="left:1567.98px;top:1808.68px;width:300px;text-align:right;font-size:24px;line-height:24px;color:#333;letter-spacing:2.78px;transform-origin:100% 20.32px;transform:rotate(-20deg);">2024-09-29</div><div class="t" style="left:1681.98px;top:1808.68px;width:300px;text-align:right;font-size:24px;line-height:24px;color:#333;letter-spacing:2.78px;transform-origin:100% 20.32px;transform:rotate(-20deg);">2024-09-30</div><div class="t" style="left:1795.98px;top:1808.68px;width:300px;text-align:right;font-size:24px;line-height:24px;color:#333;letter-spacing:2.78px;transform-origin:100% 20.32px;transform:rotate(-20deg);">2024-10-01</div><div class="t" style="left:1909.98px;top:1808.68px;width:300px;text-align:right;font-size:24px;line-height:24px;color:#333;letter-spacing:2.78px;transform-origin:100% 20.32px;transform:rotate(-20deg);">2024-10-02</div><div class="b" style="left:1903.5px;top:1930.5px;width:338px;height:65px;background:#dcddd6;border:2px solid #c9cac3;border-radius:12px;"></div><div class="b" style="left:1903.5px;top:1930.5px;width:338px;height:58px;background:#f4f5f0;border:2px solid #c9cac3;border-radius:12px;"></div><svg class="b" style="left:1915px;top:1940px;" width="45" height="40" viewBox="0 0 45 40"><path d="M19 7 H8.5 V34 H35.5 V23.5" fill="none" stroke="#222" stroke-width="3"/><path d="M14.5 28.5 L35 8 M24 6.5 H36.5 V19" fill="none" stroke="#222" stroke-width="3"/></svg><div class="t" style="left:1965.00px;top:1946.30px;font-size:28px;line-height:28px;font-weight:400;color:#111;letter-spacing:0.122px;-webkit-text-stroke:0.8px #111;">Open as new Insight</div>
</body></html>
